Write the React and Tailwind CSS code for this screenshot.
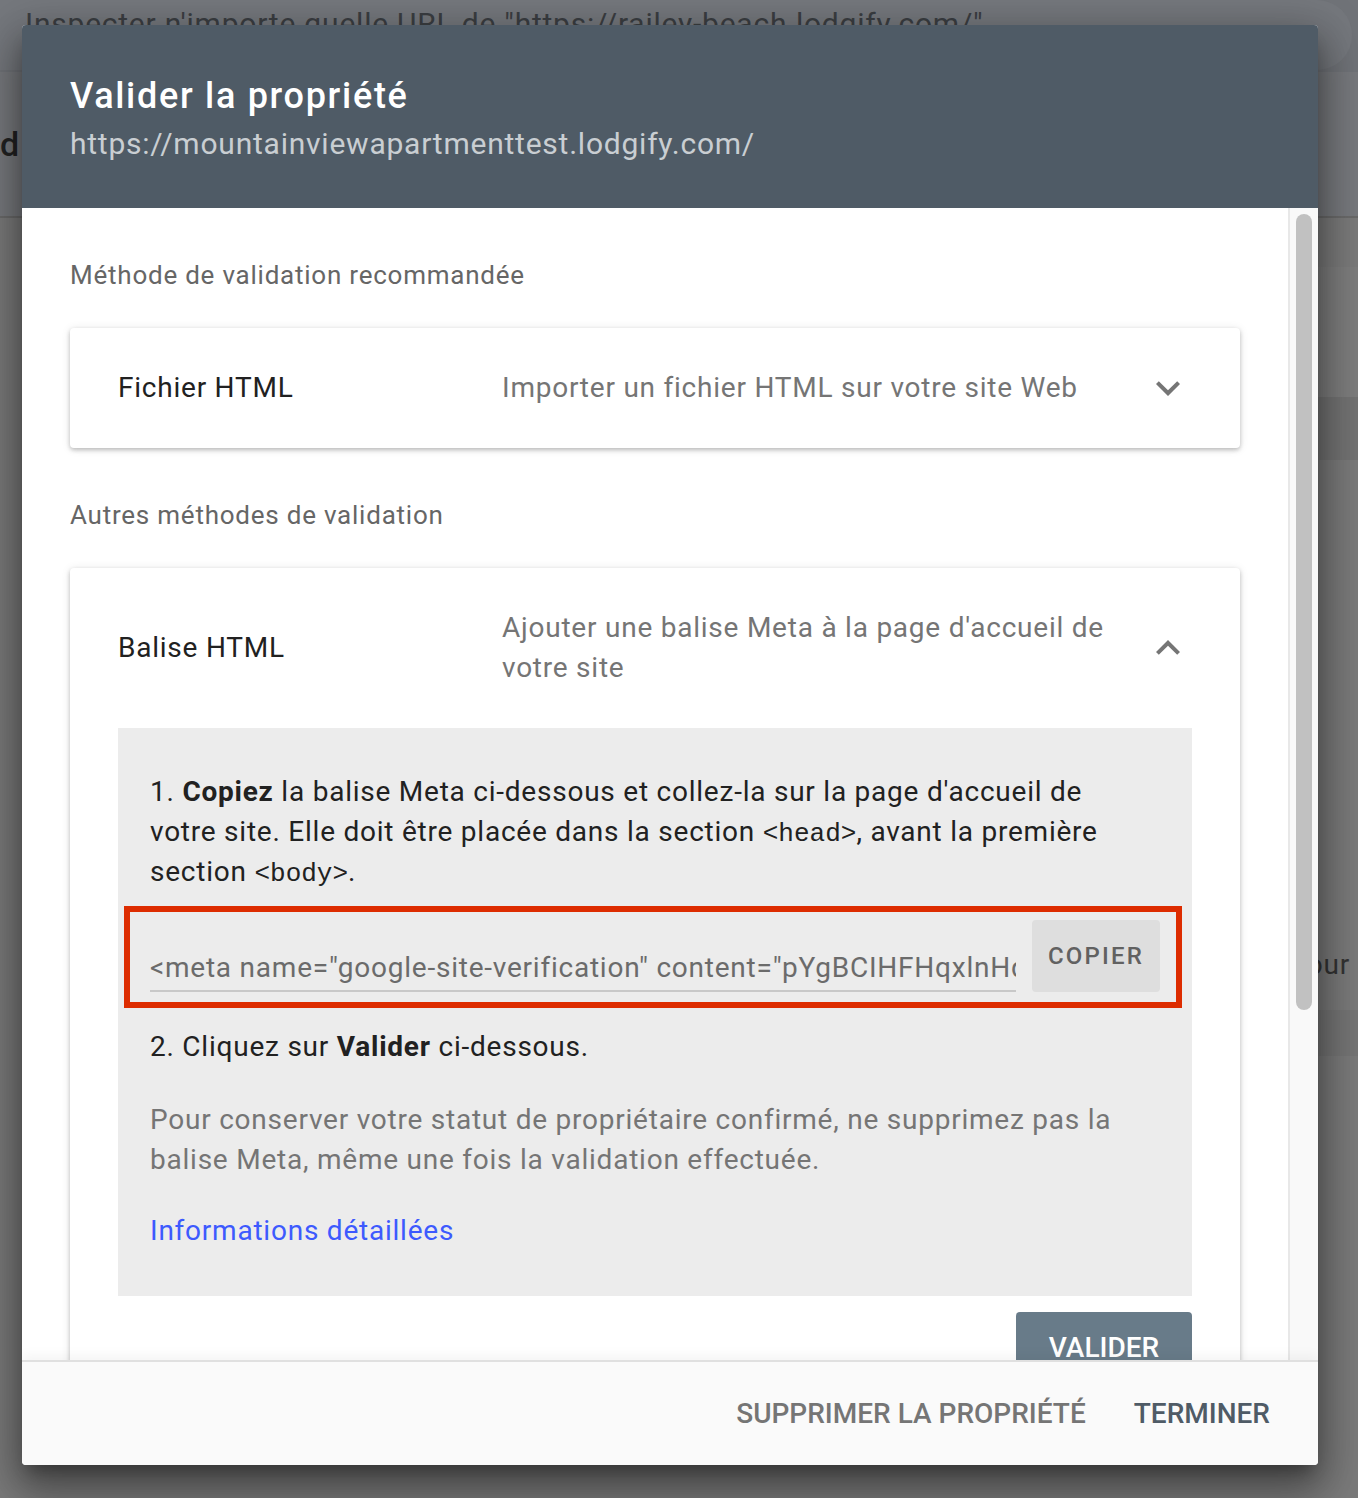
import React from 'react';

const ChevronDown = () => (
    <svg width="48" height="48" viewBox="0 0 24 24" fill="#757575" className="-my-1">
        <path d="M16.59 8.59L12 13.17 7.41 8.59 6 10l6 6 6-6z" />
    </svg>
);

const ChevronUp = () => (
    <svg width="48" height="48" viewBox="0 0 24 24" fill="#757575" className="-my-1">
        <path d="M12 8l-6 6 1.41 1.41L12 10.83l4.59 4.58L18 14z" />
    </svg>
);

const cardShadow = 'shadow-[0_2px_4px_rgba(0,0,0,0.22),0_1px_10px_rgba(0,0,0,0.1)]';
const mono = "[font-family:'Liberation_Mono',monospace] text-[26px] leading-none tracking-normal";

const Background = () => (
    <div className="absolute inset-0 flex flex-col bg-[#7a7a7a]">
        <div className="h-[72px] bg-[#707378]">
            <div className="h-[70px] w-[1352px] rounded-r-[35px] bg-[#75787d] pl-[25px] pt-[4px] text-[30px] leading-[40px] text-[#3b3e42] whitespace-nowrap">
                Inspecter n'importe quelle URL de "https://railey-beach.lodgify.com/"
            </div>
        </div>
        <div className="h-[146px] bg-[#77797d] border-b-2 border-[#6a6a6a] flex items-center">
            <span className="text-[34px] font-medium text-[#222]">d</span>
        </div>
        <div className="h-[49px] ml-[700px] bg-[#7a7a7a]" />
        <div className="h-[130px] ml-[700px] bg-[#7d7d7d]" />
        <div className="h-[63px] ml-[700px] bg-[#737373]" />
        <div className="h-[550px] flex items-end justify-end pr-[8px] pb-[25px]">
            <span className="text-[28px] text-[#333] leading-[40px]">pour</span>
        </div>
        <div className="h-[46px] ml-[700px] bg-[#757575]" />
        <div className="flex-1" />
    </div>
);

const App = () => {
    return (
        <div className="relative w-[1358px] h-[1498px] overflow-hidden [font-family:Roboto,sans-serif] tracking-[0.048em]">
            <Background />

            <div className="absolute left-[22px] top-[25px] w-[1296px] h-[1440px] rounded-[4px] overflow-hidden bg-white flex flex-col shadow-[0_24px_38px_3px_rgba(0,0,0,0.3),0_9px_46px_8px_rgba(0,0,0,0.2),0_11px_15px_-7px_rgba(0,0,0,0.3)]">
                {/* header */}
                <div className="h-[183px] bg-[#4f5b66] px-12 pt-[47px]">
                    <h1 className="text-[36px] leading-[48px] font-medium tracking-[1.7px] text-white">Valider la propriété</h1>
                    <p className="mt-[2px] text-[30px] leading-[44px] text-[#c9ced2]">https://mountainviewapartmenttest.lodgify.com/</p>
                </div>

                {/* body */}
                <div className="h-[1152px] flex">
                    <div className="flex-1 overflow-hidden px-12 pt-[49px]">
                        <div className="text-[26px] leading-[36px] text-[#666]">Méthode de validation recommandée</div>

                        <div className={`mt-[35px] rounded-[4px] bg-white ${cardShadow} flex items-center px-12 py-10`}>
                            <div className="w-[384px] text-[28px] leading-[40px] text-[#212121]">Fichier HTML</div>
                            <div className="flex-1 text-[28px] leading-[40px] text-[#757575]">Importer un fichier HTML sur votre site Web</div>
                            <ChevronDown />
                        </div>

                        <div className="mt-[49px] text-[26px] leading-[36px] text-[#666]">Autres méthodes de validation</div>

                        <div className={`mt-[35px] rounded-[4px] bg-white ${cardShadow} px-12 pt-10 pb-10`}>
                            <div className="flex items-center">
                                <div className="w-[384px] text-[28px] leading-[40px] text-[#212121]">Balise HTML</div>
                                <div className="flex-1 pr-[16px] text-[28px] leading-[40px] text-[#757575]">
                                    Ajouter une balise Meta à la page d'accueil de votre site
                                </div>
                                <ChevronUp />
                            </div>

                            <div className="mt-10 bg-[#ececec] pl-8 pr-[10px] pt-[44px] pb-[45px] text-[28px] leading-[40px] text-[#212121]">
                                <p className="pr-[40px]">
                                    1. <b className="font-bold">Copiez</b> la balise Meta ci-dessous et collez-la sur la page d'accueil de votre site. Elle doit être placée dans la section{' '}
                                    <span className={mono}>&lt;head&gt;</span>, avant la première section{' '}
                                    <span className={mono}>&lt;body&gt;</span>.
                                </p>

                                <div className="mt-[14px] -ml-[26px] border-[6px] border-[#dd2c00] flex items-center pl-[20px] pr-[16px] pt-[8px] pb-[10px]">
                                    <div className="flex-1 min-w-0 h-[72px] flex items-end">
                                        <div className="w-full overflow-hidden whitespace-nowrap border-b-2 border-[#c8c8c8] text-[28px] leading-[40px] text-[#6b6b6b] pb-[2px]">
                                            &lt;meta name="google-site-verification" content="pYgBCIHFHqxlnHq6aX1d4vVvR2m" /&gt;
                                        </div>
                                    </div>
                                    <button className="ml-4 w-[128px] h-[72px] rounded-[4px] bg-[#dedede] text-[24px] font-medium tracking-[2.2px] text-[#616161]">
                                        COPIER
                                    </button>
                                </div>

                                <p className="mt-[19px]">
                                    2. Cliquez sur <b className="font-bold">Valider</b> ci-dessous.
                                </p>

                                <p className="mt-[33px] pr-[40px] text-[#757575]">
                                    Pour conserver votre statut de propriétaire confirmé, ne supprimez pas la balise Meta, même une fois la validation effectuée.
                                </p>

                                <a className="block mt-[31px] text-[#3d5afe]">Informations détaillées</a>
                            </div>

                            <div className="mt-4 flex justify-end">
                                <button className="w-[176px] h-[72px] rounded-[4px] bg-[#687b89] text-[28px] font-medium tracking-normal text-white">
                                    VALIDER
                                </button>
                            </div>
                        </div>
                    </div>

                    {/* scrollbar */}
                    <div className="w-[30px] bg-[#f9f9f9] border-l-2 border-[#e8e8e8] px-[6px] pt-[6px]">
                        <div className="h-[796px] rounded-full bg-[#c1c1c1]" />
                    </div>
                </div>

                {/* footer */}
                <div className="flex-1 bg-[#fafafa] border-t-2 border-[#e0e0e0] shadow-[0_-6px_10px_rgba(0,0,0,0.04)] flex items-center justify-end gap-12 px-12 tracking-normal">
                    <button className="text-[28px] font-medium text-[#757575]">SUPPRIMER LA PROPRIÉTÉ</button>
                    <button className="text-[28px] font-medium text-[#4f5b66]">TERMINER</button>
                </div>
            </div>
        </div>
    );
};

export default App;
